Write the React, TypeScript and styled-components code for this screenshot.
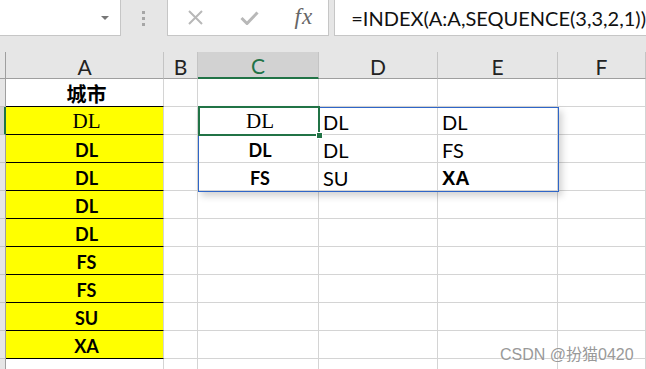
import React from 'react';
import styled, { createGlobalStyle, css } from 'styled-components';

type Kind = 'serif' | 'bold' | 'plain' | 'heavy' | 'cjk';

interface CellData {
  text?: string;
  kind?: Kind;
  align?: 'center' | 'left';
  yellow?: boolean;
}

const columns = ['A', 'B', 'C', 'D', 'E', 'F'];

const rows: CellData[][] = [
  [{ text: '城市', kind: 'cjk', align: 'center' }, {}, {}, {}, {}, {}],
  [
    { text: 'DL', kind: 'serif', align: 'center', yellow: true },
    {},
    { text: 'DL', kind: 'serif', align: 'center' },
    { text: 'DL', kind: 'plain' },
    { text: 'DL', kind: 'plain' },
    {},
  ],
  [
    { text: 'DL', kind: 'bold', align: 'center', yellow: true },
    {},
    { text: 'DL', kind: 'bold', align: 'center' },
    { text: 'DL', kind: 'plain' },
    { text: 'FS', kind: 'plain' },
    {},
  ],
  [
    { text: 'DL', kind: 'bold', align: 'center', yellow: true },
    {},
    { text: 'FS', kind: 'bold', align: 'center' },
    { text: 'SU', kind: 'plain' },
    { text: 'XA', kind: 'heavy' },
    {},
  ],
  ...['DL', 'DL', 'FS', 'FS', 'SU', 'XA'].map((t) => [
    { text: t, kind: 'bold' as Kind, align: 'center' as const, yellow: true },
    {},
    {},
    {},
    {},
    {},
  ]),
  [{}, {}, {}, {}, {}, {}],
];

const App: React.FC = () => {
  return (
    <>
      <GlobalStyle />
      <Page>
        <Toolbar>
          <NameBox>
            <DropArrow />
          </NameBox>
          <Grip>
            <span />
            <span />
            <span />
          </Grip>
          <IconBox>
            <svg width="17" height="15" viewBox="0 0 17 15">
              <path d="M2 1 L15 14 M15 1 L2 14" stroke="#b8b8b8" strokeWidth="2" fill="none" />
            </svg>
            <svg width="19" height="14" viewBox="0 0 19 14">
              <path d="M1.5 7 L7 12.5 L17.5 1.5" stroke="#b8b8b8" strokeWidth="3" fill="none" />
            </svg>
            <Fx>fx</Fx>
          </IconBox>
          <FormulaBox>=INDEX(A:A,SEQUENCE(3,3,2,1))</FormulaBox>
        </Toolbar>

        <Sheet>
          <Corner />
          {columns.map((c) => (
            <ColHead key={c} $active={c === 'C'}>
              {c}
            </ColHead>
          ))}
          {rows.map((row, r) => (
            <React.Fragment key={r}>
              <RowHead $active={r === 1} />
              {row.map((cell, c) => (
                <Cell
                  key={c}
                  $yellow={!!cell.yellow}
                  $blackBottom={c === 0 && r <= 9}
                  $align={cell.align || 'left'}
                >
                  {cell.text && <Value $kind={cell.kind || 'plain'}>{cell.text}</Value>}
                </Cell>
              ))}
            </React.Fragment>
          ))}
          <Range />
          <Active>
            <Handle />
          </Active>
          <Watermark>CSDN @扮猫0420</Watermark>
        </Sheet>
      </Page>
    </>
  );
};

const GlobalStyle = createGlobalStyle`
  html, body {
    margin: 0;
    padding: 0;
    background: #ffffff;
    overflow: hidden;
  }
  * {
    box-sizing: border-box;
  }
`;

const Page = styled.div`
  width: 646px;
  height: 369px;
  overflow: hidden;
  background: #ffffff;
  font-family: Lato, 'Liberation Sans', sans-serif;
`;

const Toolbar = styled.div`
  display: flex;
  align-items: flex-start;
  height: 52px;
  background: #e6e6e6;
`;

const NameBox = styled.div`
  position: relative;
  width: 121px;
  height: 36px;
  background: #ffffff;
  border: 1px solid #c6c6c6;
  border-top: none;
  border-left: none;
`;

const DropArrow = styled.div`
  position: absolute;
  right: 11px;
  top: 16px;
  width: 0;
  height: 0;
  border-left: 4px solid transparent;
  border-right: 4px solid transparent;
  border-top: 4px solid #777777;
`;

const Grip = styled.div`
  width: 46px;
  height: 36px;
  display: flex;
  flex-direction: column;
  align-items: center;
  justify-content: center;
  gap: 3px;

  span {
    width: 3px;
    height: 3px;
    background: #a6a6a6;
  }
`;

const IconBox = styled.div`
  width: 163px;
  height: 36px;
  background: #ffffff;
  border: 1px solid #c6c6c6;
  border-top: none;
  display: flex;
  align-items: center;
  padding-left: 19px;
  gap: 36px;
`;

const Fx = styled.div`
  font-family: 'Liberation Serif', serif;
  font-style: italic;
  font-size: 23px;
  color: #666666;
  line-height: 1;
  letter-spacing: 1px;
  margin-top: -2px;
`;

const FormulaBox = styled.div`
  flex: 1;
  margin-left: 5px;
  height: 36px;
  background: #ffffff;
  border: 1px solid #c6c6c6;
  border-top: none;
  border-right: none;
  padding-left: 16px;
  display: flex;
  align-items: center;
  font-size: 20px;
  color: #111111;
  white-space: nowrap;
`;

const Sheet = styled.div`
  position: relative;
  display: grid;
  grid-template-columns: 6px 158px 34px 121px 119px 120px 1fr;
  grid-template-rows: 27px repeat(11, 28px);
`;

const headBase = css`
  background: #e6e6e6;
  border-right: 1px solid #c4c4c4;
  border-bottom: 1px solid #9f9f9f;
`;

const Corner = styled.div`
  ${headBase};
  border-right: 1px solid #9f9f9f;
`;

const ColHead = styled.div<{ $active: boolean }>`
  ${headBase};
  display: flex;
  align-items: center;
  justify-content: center;
  padding-top: 2px;
  font-size: 21px;
  color: ${(p) => (p.$active ? '#217346' : '#222222')};
  background: ${(p) => (p.$active ? '#d2d2d2' : '#e6e6e6')};
  border-bottom: ${(p) => (p.$active ? '2px solid #217346' : '1px solid #9f9f9f')};
`;

const RowHead = styled.div<{ $active: boolean }>`
  background: ${(p) => (p.$active ? '#d2d2d2' : '#e6e6e6')};
  border-bottom: 1px solid #c4c4c4;
  border-right: ${(p) => (p.$active ? '2px solid #217346' : '1px solid #9f9f9f')};
`;

const Cell = styled.div<{ $yellow: boolean; $blackBottom: boolean; $align: 'center' | 'left' }>`
  display: flex;
  align-items: center;
  justify-content: ${(p) => (p.$align === 'center' ? 'center' : 'flex-start')};
  padding: 2px 0 0 4px;
  background: ${(p) => (p.$yellow ? '#ffff00' : '#ffffff')};
  border-right: 1px solid #d4d4d4;
  border-bottom: 1px solid ${(p) => (p.$blackBottom ? '#000000' : '#d4d4d4')};
  overflow: hidden;
`;

const kinds: Record<Kind, ReturnType<typeof css>> = {
  serif: css`
    font-family: 'Liberation Serif', serif;
    font-size: 21px;
  `,
  bold: css`
    font-family: Lato, sans-serif;
    font-weight: 700;
    font-size: 18px;
  `,
  plain: css`
    font-family: Lato, sans-serif;
    font-size: 20px;
  `,
  heavy: css`
    font-family: 'Liberation Sans', sans-serif;
    font-weight: 700;
    font-size: 20px;
  `,
  cjk: css`
    font-family: 'Noto Sans CJK SC', sans-serif;
    font-weight: 700;
    font-size: 20px;
  `,
};

const Value = styled.span<{ $kind: Kind }>`
  color: #000000;
  line-height: 1;
  ${(p) => kinds[p.$kind]};
`;

const Range = styled.div`
  position: absolute;
  left: 198px;
  top: 55px;
  width: 361px;
  height: 85px;
  border: 1px solid #2f66c8;
  box-shadow: 3px 4px 7px rgba(0, 0, 0, 0.18);
  pointer-events: none;
`;

const Active = styled.div`
  position: absolute;
  left: 198px;
  top: 54px;
  width: 122px;
  height: 30px;
  border: 2px solid #217346;
  pointer-events: none;
`;

const Handle = styled.div`
  position: absolute;
  right: -5px;
  bottom: -5px;
  width: 7px;
  height: 7px;
  background: #217346;
  border: 1px solid #ffffff;
`;

const Watermark = styled.div`
  position: absolute;
  left: 500px;
  top: 289px;
  font-family: 'Liberation Sans', 'Noto Sans CJK SC', sans-serif;
  font-size: 16px;
  color: #999999;
  text-shadow: 0 0 2px #ffffff;
  white-space: nowrap;
`;

export default App;
